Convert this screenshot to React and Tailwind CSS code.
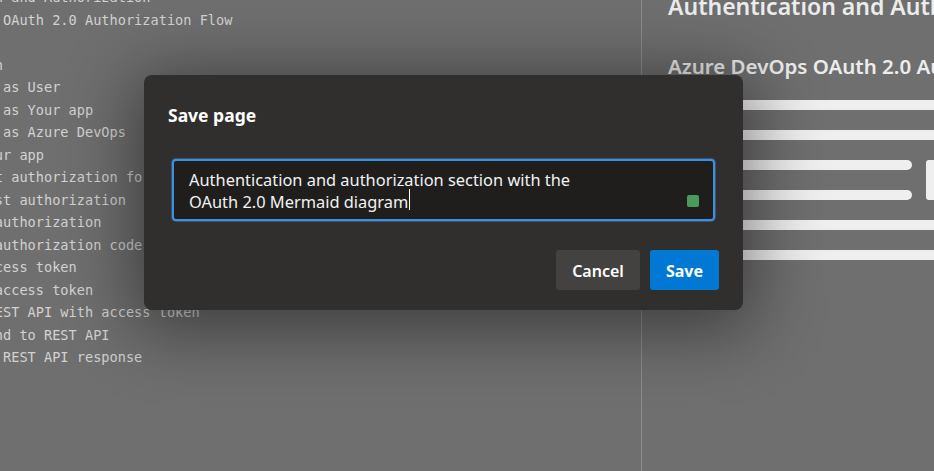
const codeLines = [
  "n and Authorization",
  " OAuth 2.0 Authorization Flow",
  "",
  "n",
  " as User",
  " as Your app",
  " as Azure DevOps",
  "ur app",
  "t authorization for user",
  "st authorization",
  "authorization",
  "authorization code",
  "cess token",
  "access token",
  "EST API with access token",
  "nd to REST API",
  " REST API response",
];

const ui = { fontFamily: '"Noto Sans", "Open Sans", sans-serif' };

const Bar = ({ short }) => (
  <div className={short ? "h-[10px] w-[244px] rounded-r-full bg-[#efefef]" : "h-[10px] w-full bg-[#efefef]"} />
);

const App = () => {
  return (
    <div className="relative w-[934px] h-[471px] overflow-hidden bg-[#6f6f6f]">
      <div className="flex h-full">
        {/* editor */}
        <div className="w-[642px] h-full overflow-hidden border-r border-[#8c8c8c]">
          <div
            className="ml-[-5.2px] mt-[-13.75px] whitespace-pre text-[13.62px] leading-[22.5px] text-[#d2d2d2]"
            style={{ fontFamily: '"DejaVu Sans Mono", monospace' }}
          >
            {codeLines.map((line, i) => (
              <div key={i} className="h-[22.5px]">
                {line}
              </div>
            ))}
          </div>
        </div>

        {/* preview */}
        <div className="flex-1 h-full overflow-hidden pl-[26px] text-[#ececec]" style={ui}>
          <h1 className="mt-[-10px] whitespace-nowrap text-[23px] font-semibold leading-[32px]">
            Authentication and Authorization
          </h1>
          <h2 className="mt-[30px] whitespace-nowrap text-[20.5px] font-semibold leading-[28px]">
            Azure DevOps OAuth 2.0 Authorization Flow
          </h2>
          <div className="mt-[20px] flex flex-col gap-[20px]">
            <Bar />
            <Bar />
            <div className="flex gap-[14px]">
              <div className="flex flex-col gap-[20px]">
                <Bar short />
                <Bar short />
              </div>
              <div className="h-[40px] w-[60px] rounded-l-[3px] bg-[#efefef]" />
            </div>
            <Bar />
            <Bar />
          </div>
        </div>
      </div>

      {/* save dialog */}
      <div
        className="absolute left-[144px] top-[75px] flex w-[599px] h-[235px] flex-col rounded-[8px] bg-[#302f2e] px-[24px] shadow-[0_10px_70px_10px_rgba(0,0,0,0.45)]"
        style={ui}
      >
        <h3 className="mt-[27px] text-[17.5px] font-bold leading-[26px] text-white">Save page</h3>
        <div className="mx-[4px] mt-[31px] relative h-[62px] rounded-[4px] border-2 border-[#3f8fe0] bg-[#1f1e1d] px-[15px] py-[8px] shadow-[0_0_0_1px_rgba(80,150,230,0.35)]">
          <p className="text-[16.4px] leading-[22px] text-[#f2f2f2]">
            Authentication and authorization section with the
            <br />
            OAuth 2.0 Mermaid diagram
            <span className="relative">
              <span className="absolute left-[1px] top-[-1px] h-[21px] w-px bg-white" />
            </span>
          </p>
          <span className="absolute right-[14px] bottom-[12px] h-[12px] w-[12px] rounded-[2px] bg-[#4c9a5b]" />
        </div>
        <div className="mt-[29px] flex justify-end gap-[10px]">
          <button className="h-[40px] w-[84px] rounded-[3px] bg-[#434241] pt-[2px] text-[16px] font-semibold text-white">
            Cancel
          </button>
          <button className="h-[40px] w-[69px] rounded-[3px] bg-[#0078d4] pt-[2px] text-[16px] font-bold text-white">
            Save
          </button>
        </div>
      </div>
    </div>
  );
};

export default App;
